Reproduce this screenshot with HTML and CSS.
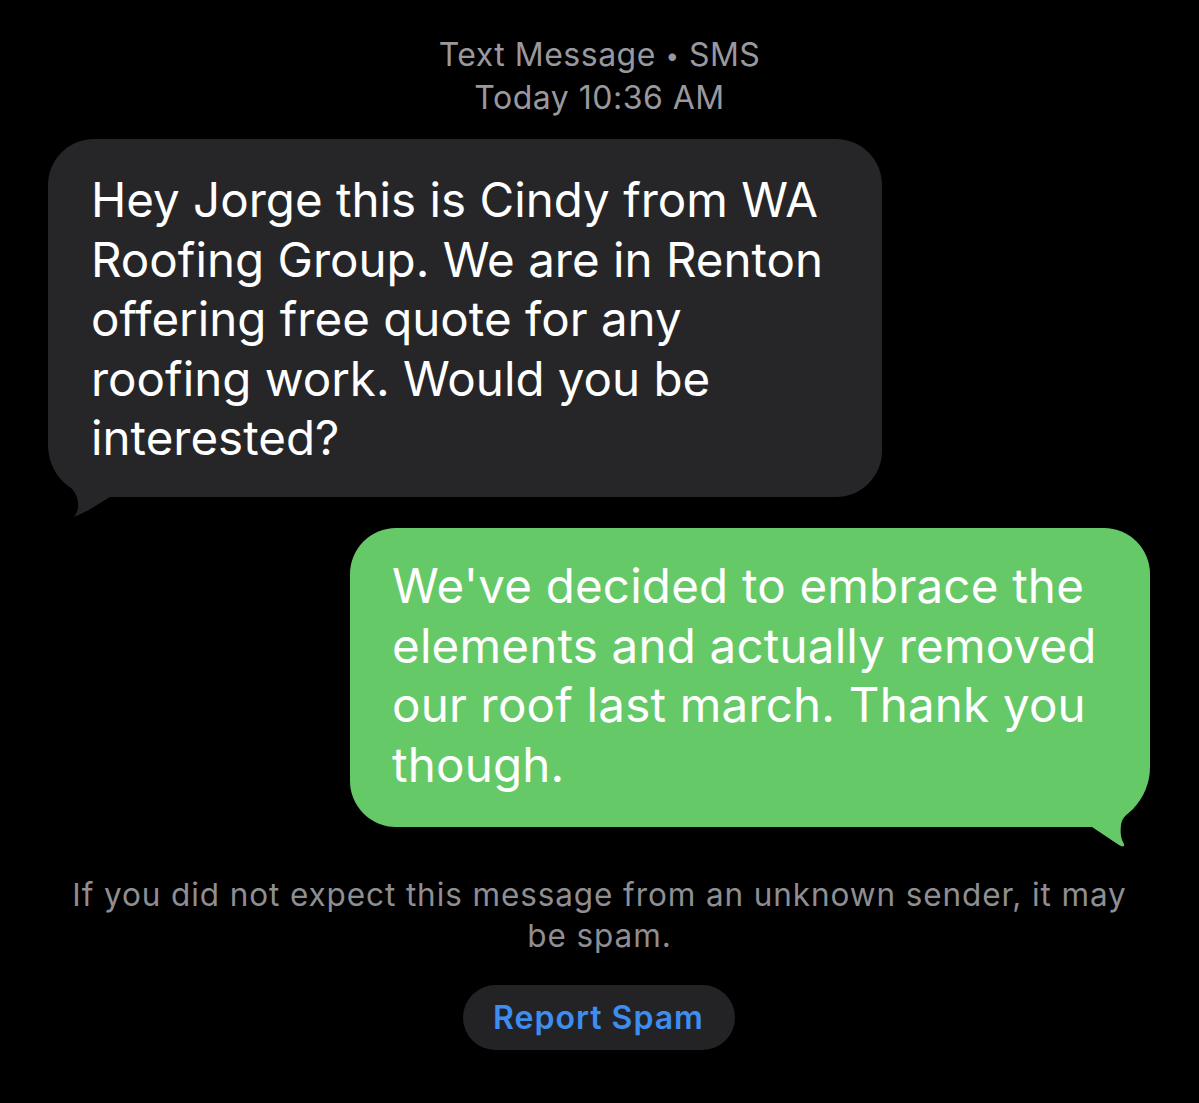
FILE: index.html
```html
<!DOCTYPE html>
<html lang="en">
<head>
<meta charset="utf-8">
<title>Messages</title>
<link rel="stylesheet" href="styles.css">
</head>
<body>
<main class="thread">
  <header class="meta">
    <div>Text Message <span class="dot">•</span> SMS</div>
    <div>Today 10:36 AM</div>
  </header>

  <div class="bubble incoming">
    <p>Hey Jorge this is Cindy from WA Roofing Group. We are in Renton offering free quote for any roofing work. Would you be interested?</p>
    <svg class="tail tail-in" width="80" height="80" viewBox="0 0 80 80"><path d="M32,48 C36,52 39,60 38,67 C37,72 35,75 33,76 C46,72 58,63 70,56 L70,40 L32,40 Z" /></svg>
  </div>

  <div class="bubble outgoing">
    <p>We've decided to embrace the elements and actually removed our roof last march. Thank you though.</p>
    <svg class="tail tail-out" width="80" height="70" viewBox="0 0 80 70"><path d="M64,27 C58,32 52,36 51,44 C50,52 51,58 54,63 C55,66 52,66 49,64 L22,46 L22,30 Z" /></svg>
  </div>

  <p class="notice">If you did not expect this message from an unknown sender, it may be spam.</p>

  <div class="actions">
    <button class="report" type="button">Report Spam</button>
  </div>
</main>
</body>
</html>
```

FILE: styles.css
```css
html, body {
  margin: 0;
  padding: 0;
  background: #000;
}

body {
  font-family: Inter, "Noto Sans", "Liberation Sans", sans-serif;
  color: #fff;
  width: 1199px;
  height: 1103px;
  overflow: hidden;
}

.thread {
  display: flex;
  flex-direction: column;
  padding-top: 34px;
}

.meta {
  text-align: center;
  color: #98989e;
  font-size: 32px;
  line-height: 42px;
  letter-spacing: 0.5px;
}

.dot {
  font-size: 24px;
  vertical-align: 2px;
}

.bubble {
  position: relative;
  box-sizing: border-box;
  border-radius: 46px;
}

.bubble p {
  margin: 0;
  position: relative;
  z-index: 1;
  font-size: 47.5px;
  line-height: 59.5px;
  letter-spacing: 0;
}

.incoming {
  margin-top: 20px;
  margin-left: 48px;
  width: 834px;
  min-height: 358px;
  padding: 31px 40px 27px 43px;
  background: #262628;
  border-bottom-left-radius: 52px;
}

.outgoing {
  margin-top: 31px;
  margin-left: 350px;
  width: 800px;
  min-height: 299px;
  padding: 28px 36px 27px 42px;
  background: #66c968;
  border-bottom-right-radius: 60px;
}

.outgoing p {
  letter-spacing: 0.2px;
}

.tail {
  position: absolute;
  display: block;
}

.tail-in {
  left: -8px;
  bottom: -24px;
  fill: #262628;
}

.tail-out {
  right: 0;
  bottom: -24px;
  fill: #66c968;
}

.notice {
  margin: 47px 60px 0;
  text-align: center;
  color: #8e8e93;
  font-size: 31.5px;
  line-height: 41px;
  letter-spacing: 0.9px;
}

.actions {
  display: flex;
  justify-content: center;
  margin-top: 29px;
}

.report {
  width: 272px;
  height: 65px;
  border: 0;
  border-radius: 33px;
  background: #232326;
  color: #3d8ef0;
  font-family: Inter, "Noto Sans", "Liberation Sans", sans-serif;
  font-size: 32px;
  font-weight: 600;
  letter-spacing: 1px;
  padding: 0;
  margin-left: -2px;
}
```
